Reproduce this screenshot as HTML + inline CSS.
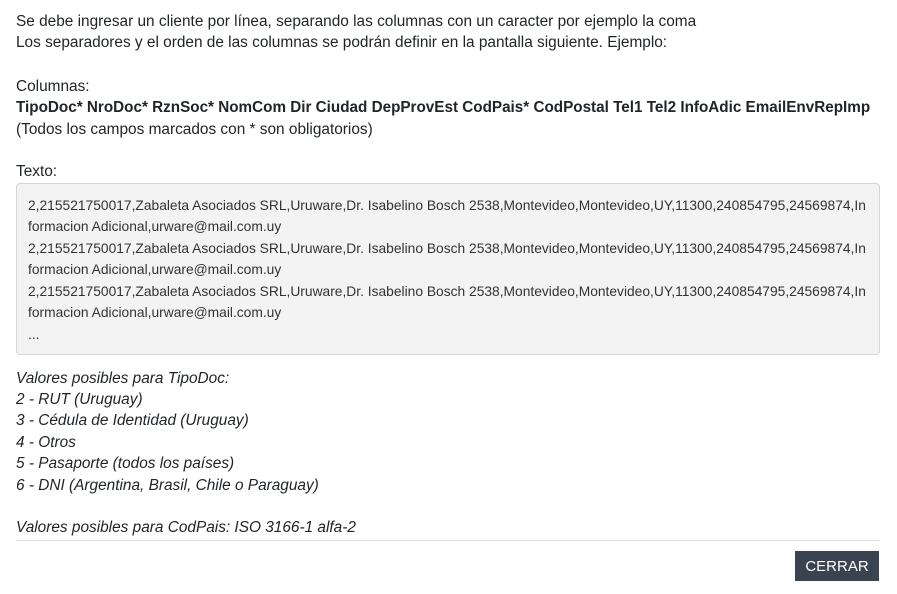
<!DOCTYPE html>
<html><head><meta charset="utf-8"><style>
body{margin:0;width:897px;height:594px;background:#fff;font-family:"Liberation Sans",sans-serif;color:#212529;position:relative;overflow:hidden}
.t{position:absolute;left:16px;font-size:15.4px;white-space:nowrap;line-height:21px}
.b{font-weight:bold;font-size:15.25px}
.i{font-style:italic}
.box{position:absolute;left:16px;top:183px;width:864px;height:172px;background:#f3f3f3;border:1px solid #d6d6d6;border-radius:4px;box-sizing:border-box}
.box div{position:absolute;left:11px;font-size:13.8px;white-space:nowrap;color:#333}
.sep{position:absolute;left:16px;top:540px;width:864px;height:1px;background:#dedede}
.btn{position:absolute;left:795px;top:551px;width:84px;height:30px;background:#3a4350;color:#fff;font-size:15px;text-align:center;line-height:32px}
</style></head><body>
<div class="t" style="top:11px">Se debe ingresar un cliente por línea, separando las columnas con un caracter por ejemplo la coma</div>
<div class="t" style="top:32px">Los separadores y el orden de las columnas se podrán definir en la pantalla siguiente. Ejemplo:</div>
<div class="t" style="top:76px">Columnas:</div>
<div class="t b" style="top:97px">TipoDoc* NroDoc* RznSoc* NomCom Dir Ciudad DepProvEst CodPais* CodPostal Tel1 Tel2 InfoAdic EmailEnvRepImp</div>
<div class="t" style="top:119px">(Todos los campos marcados con * son obligatorios)</div>
<div class="t" style="top:161px">Texto:</div>
<div class="box">
<div style="top:14px">2,215521750017,Zabaleta Asociados SRL,Uruware,Dr. Isabelino Bosch 2538,Montevideo,Montevideo,UY,11300,240854795,24569874,In</div>
<div style="top:35px">formacion Adicional,urware@mail.com.uy</div>
<div style="top:57px">2,215521750017,Zabaleta Asociados SRL,Uruware,Dr. Isabelino Bosch 2538,Montevideo,Montevideo,UY,11300,240854795,24569874,In</div>
<div style="top:78px">formacion Adicional,urware@mail.com.uy</div>
<div style="top:100px">2,215521750017,Zabaleta Asociados SRL,Uruware,Dr. Isabelino Bosch 2538,Montevideo,Montevideo,UY,11300,240854795,24569874,In</div>
<div style="top:121px">formacion Adicional,urware@mail.com.uy</div>
<div style="top:143px">...</div>
</div>
<div class="t i" style="top:368px">Valores posibles para TipoDoc:</div>
<div class="t i" style="top:389px">2 - RUT (Uruguay)</div>
<div class="t i" style="top:410px">3 - Cédula de Identidad (Uruguay)</div>
<div class="t i" style="top:432px">4 - Otros</div>
<div class="t i" style="top:453px">5 - Pasaporte (todos los países)</div>
<div class="t i" style="top:475px">6 - DNI (Argentina, Brasil, Chile o Paraguay)</div>
<div class="t i" style="top:517px">Valores posibles para CodPais: ISO 3166-1 alfa-2</div>
<div class="sep"></div>
<div class="btn">CERRAR</div>
</body></html>
